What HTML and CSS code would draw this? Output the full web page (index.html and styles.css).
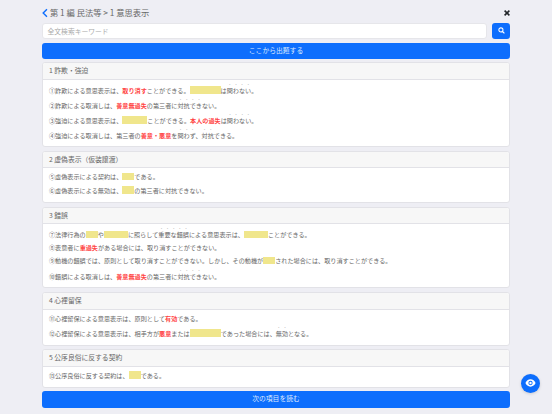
FILE: index.html
```html
<!DOCTYPE html>
<html lang="ja">
<head>
<meta charset="utf-8">
<title>意思表示</title>
<link rel="stylesheet" href="styles.css">
</head>
<body>
<div class="page">
  <header class="top">
    <svg class="back" viewBox="0 0 8 12" width="6" height="10"><path d="M6.6 1 1.6 6l5 5" fill="none" stroke="#0d6efd" stroke-width="1.9"/></svg>
    <span class="title">第 1 編 民法等 &gt; 1 意思表示</span>
    <svg class="close" viewBox="0 0 10 10" width="6" height="6"><path d="M1 1l8 8M9 1l-8 8" stroke="#212529" stroke-width="2.6"/></svg>
  </header>
  <div class="search">
    <div class="input">全文検索キーワード</div>
    <div class="searchbtn"><svg viewBox="0 0 12 12" width="7" height="7"><circle cx="5" cy="5" r="3.5" fill="none" stroke="#fff" stroke-width="1.8"/><path d="M7.7 7.7 11 11" stroke="#fff" stroke-width="2"/></svg></div>
  </div>
  <div class="btn">ここから出題する</div>
  <section class="card">
    <h2>1 詐欺・強迫</h2>
    <div class="body">
      <p>①詐欺による意思表示は、<b>取り消す</b>ことができる。<i class="w31"></i>は<em>問わない</em>。</p>
      <p>②詐欺による取消しは、<b>善意無過失</b>の第三者に<em>対抗でき</em>ない。</p>
      <p>③強迫による意思表示は、<i class="w25"></i>ことができる。<b>本人の過失</b>は<em>問わない</em>。</p>
      <p>④強迫による取消しは、第三者の<b>善意・悪意</b>を<em>問わず</em>、<em>対抗</em>できる。</p>
    </div>
  </section>
  <section class="card">
    <h2>2 虚偽表示（仮装譲渡）</h2>
    <div class="body">
      <p>⑤虚偽表示による契約は、<i class="w12"></i>である。</p>
      <p>⑥虚偽表示による無効は、<i class="w12"></i>の第三者に対抗できない。</p>
    </div>
  </section>
  <section class="card">
    <h2>3 錯誤</h2>
    <div class="body">
      <p>⑦法律行為の<i class="w12"></i>や<i class="w24"></i>に照らして<em>重要な錯誤</em>による意思表示は、<i class="w24"></i>ことができる。</p>
      <p>⑧表意者に<b>重過失</b>がある場合には、取り消すことができない。</p>
      <p>⑨動機の錯誤では、原則として取り消すことができない。しかし、その動機が<i class="w12"></i>された場合には、取り消すことができる。</p>
      <p>⑩錯誤による取消しは、<b>善意無過失</b>の第三者に<em>対抗でき</em>ない。</p>
    </div>
  </section>
  <section class="card">
    <h2>4 心裡留保</h2>
    <div class="body">
      <p>⑪心裡留保による意思表示は、原則として<b>有効</b>である。</p>
      <p>⑫心裡留保による意思表示は、相手方が<b>悪意</b>または<i class="w31"></i>であった場合には、<em>無効</em>となる。</p>
    </div>
  </section>
  <section class="card">
    <h2>5 公序良俗に反する契約</h2>
    <div class="body">
      <p>⑬公序良俗に反する契約は、<i class="w12"></i>である。</p>
    </div>
  </section>
  <div class="btn">次の項目を読む</div>
</div>
<div class="fab"><svg viewBox="0 0 16 12" width="11" height="8"><path d="M8 0.5C4.5 0.5 1.7 3 .4 6c1.3 3 4.1 5.5 7.6 5.5s6.3-2.500 7.600-5.500C14.300 3 11.500.5 8 .5z" fill="#fff"/><circle cx="8" cy="6" r="3.200" fill="#0d6efd"/><circle cx="8" cy="6" r="1.800" fill="#fff"/></svg></div>
</body>
</html>
```
FILE: styles.css
```css
* { box-sizing: border-box; }
html, body { margin: 0; height: 100%; }
body {
  background: #eeeef4;
  font-family: "Noto Sans CJK JP", "Liberation Sans", sans-serif;
  color: #666;
  font-size: 6.13px;
  overflow: hidden;
  position: relative;
}
.page {
  width: 468px;
  margin: 0 auto;
  padding-top: 6.3px;
  display: flex;
  flex-direction: column;
  gap: 3.6px;
}
.top {
  display: flex;
  align-items: center;
  height: 13px;
}
.back { margin-right: 2px; flex: none; }
.title { font-size: 8.28px; line-height: 13px; color: #666; flex: 1; }
.search { display: flex; gap: 5px; height: 16.2px; }
.input {
  flex: 1;
  background: #fff;
  border: 1px solid #e6e6ea;
  border-radius: 3px;
  padding: 0 4.5px;
  line-height: 14.2px;
  color: #aaa;
  font-size: 6.8px;
}
.searchbtn {
  width: 18px;
  background: #0d6efd;
  border-radius: 3px;
  display: flex;
  align-items: center;
  justify-content: center;
}
.btn {
  height: 16.2px;
  background: #0d6efd;
  border-radius: 3px;
  color: #dfeaff;
  text-align: center;
  line-height: 15.8px;
  font-size: 6.8px;
}
.card {
  background: #fff;
  border: 1px solid #e2e2e7;
  border-radius: 3px;
  overflow: hidden;
}
.card h2 {
  margin: 0;
  height: 16.5px;
  padding: 0 6px;
  background: #f7f7f7;
  border-bottom: 1px solid #e2e2e7;
  font-size: 6.8px;
  font-weight: 400;
  line-height: 15.5px;
  color: #666;
}
.body { padding: 2px 6px 4.8px; }
.body p {
  margin: 0;
  height: 13.4px;
  line-height: 13.4px;
  white-space: nowrap;
}
.body p:has(em) { height: 14.9px; line-height: 16.4px; }
b { color: #f44; font-weight: 700; }
em {
  font-style: normal;
  text-emphasis: filled dot #aaa;
  -webkit-text-emphasis: filled dot #aaa;
}
i { display: inline-block; height: 7.5px; background: #f0e68c; vertical-align: -1px; }
.w31 { width: 31px; }
.w25 { width: 25px; }
.w24 { width: 24px; }
.w12 { width: 12px; }
.fab {
  position: absolute;
  left: 521px;
  top: 373.5px;
  width: 19px;
  height: 19px;
  border-radius: 50%;
  background: #0d6efd;
  box-shadow: 0 1px 3px rgba(0,0,0,.15);
  display: flex;
  align-items: center;
  justify-content: center;
}
```
